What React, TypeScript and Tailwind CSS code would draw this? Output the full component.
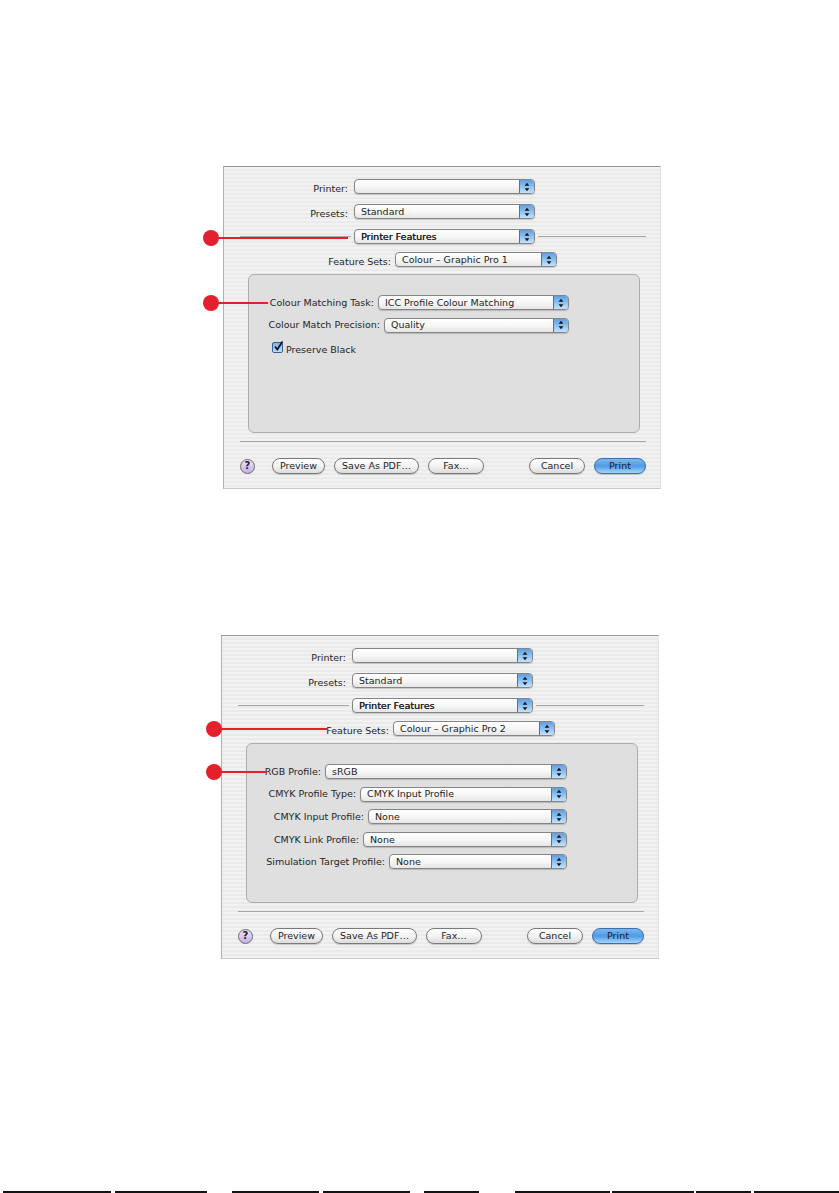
import type { ReactNode } from "react";

// Scanned page strip at the very bottom of the sheet
const SCAN_SEGMENTS = [
  "ml-[3px] w-[108px]",
  "ml-[4px] w-[92px]",
  "ml-[25px] w-[87px]",
  "ml-[4px] w-[87px]",
  "ml-[14px] w-[55px]",
  "ml-[36px] w-[95px]",
  "ml-[2px] w-[82px]",
  "ml-[2px] w-[55px]",
  "ml-[3px] w-[85px]",
];

function Arrows() {
  return (
    <svg width="6" height="10" viewBox="0 0 6 10" className="block">
      <path d="M3 0.8 L5.4 3.8 H0.6 Z M3 9.2 L5.4 6.2 H0.6 Z" fill="#151515" />
    </svg>
  );
}

function Popup({ value, className = "", strong = false }: { value: string; className?: string; strong?: boolean }) {
  return (
    <div
      className={`flex h-[15px] shrink-0 items-stretch overflow-hidden rounded-[4px] border border-[#858585] bg-linear-to-b from-white via-[#f7f7f7] to-[#e6e6e6] shadow-[0_1px_1px_rgba(0,0,0,0.18)] ${className}`}
    >
      <span
        className={`flex flex-1 items-center truncate pl-[6px] text-[9.5px] leading-none text-[#1c1c1c] ${
          strong ? "[text-shadow:0.25px_0_0_#1c1c1c]" : ""
        }`}
      >
        {value}
      </span>
      <span className="flex w-[15px] items-center justify-center border-l border-[#4a74b0] bg-linear-to-b from-[#5d9fe3] via-[#8cc0f0] to-[#c4e2fb]">
        <Arrows />
      </span>
    </div>
  );
}

function Pill({ label, className = "", primary = false }: { label: string; className?: string; primary?: boolean }) {
  return (
    <div
      className={`flex h-[16px] shrink-0 items-center justify-center rounded-full border text-[9.5px] leading-none text-[#1e1e1e] shadow-[0_1px_1px_rgba(0,0,0,0.18)] ${
        primary
          ? "border-[#3d6eae] bg-linear-to-b from-[#7ab8f0] via-[#4d9ae5] to-[#a6d4fa]"
          : "border-[#7a7a7a] bg-linear-to-b from-white via-[#f3f3f3] to-[#dcdcdc]"
      } ${className}`}
    >
      {label}
    </div>
  );
}

function Callout({ className, lineClass }: { className: string; lineClass: string }) {
  return (
    <div className={`absolute flex items-center ${className}`}>
      <div className="h-[16px] w-[16px] rounded-full bg-[#e3202b]" />
      <div className={`-ml-[2px] h-[2px] bg-[#e3202b] ${lineClass}`} />
    </div>
  );
}

function Label({ children }: { children: ReactNode }) {
  return <span className="whitespace-nowrap text-[9.5px] leading-none text-[#252525]">{children}</span>;
}

function InnerRow({ label, value, popupClass }: { label: string; value: string; popupClass: string }) {
  return (
    <div className="flex h-[15px] items-center justify-end pr-[70px]">
      <Label>{label}</Label>
      <Popup value={value} className={`ml-[4px] ${popupClass}`} />
    </div>
  );
}

function PrintDialog({
  featureSet,
  heightClass,
  boxClass,
  children,
  callouts,
}: {
  featureSet: string;
  heightClass: string;
  boxClass: string;
  children: ReactNode;
  callouts: ReactNode;
}) {
  return (
    <div
      className={`relative flex w-[438px] flex-col border-t border-l border-b border-r border-t-[#979797] border-l-[#b0b0b0] border-b-[#c9c9c9] border-r-[#e2e2e2] bg-[image:repeating-linear-gradient(to_bottom,#f2f2f2_0px,#f2f2f2_2px,#eaeaea_2px,#eaeaea_4px)] ${heightClass}`}
    >
      <div className="mt-[12px] flex h-[15px] items-center">
        <span className="w-[124px] text-right">
          <Label>Printer:</Label>
        </span>
        <Popup value="" className="ml-[6px] w-[181px]" />
      </div>

      <div className="mt-[10px] flex h-[15px] items-center">
        <span className="w-[124px] text-right">
          <Label>Presets:</Label>
        </span>
        <Popup value="Standard" className="ml-[6px] w-[181px]" />
      </div>

      <div className="mt-[10px] flex h-[15px] items-center">
        <div className="ml-[16px] h-px w-[111px] bg-[#a6a6a6]" />
        <Popup value="Printer Features" strong className="ml-[3px] w-[181px]" />
        <div className="mr-[14px] ml-[3px] h-px flex-1 bg-[#a6a6a6]" />
      </div>

      <div className="mt-[8px] flex h-[15px] items-center">
        <span className="w-[167px] text-right">
          <Label>Feature Sets:</Label>
        </span>
        <Popup value={featureSet} className="ml-[4px] w-[162px]" />
      </div>

      <div
        className={`mt-[7px] ml-[24px] flex w-[392px] flex-col gap-[7.6px] rounded-[6px] border border-[#adadad] bg-[#dfdfdf] pt-[20px] ${boxClass}`}
      >
        {children}
      </div>

      <div className="mt-[8px] mr-[14px] ml-[16px] h-px bg-[#a6a6a6]" />

      <div className="mt-[16px] flex h-[16px] items-center pr-[14px] pl-[16px]">
        <div className="flex h-[15px] w-[15px] items-center justify-center rounded-full border border-[#6c6c6c] bg-linear-to-b from-[#eee3fa] to-[#c6aee6] text-[10px] font-bold leading-none text-[#222]">
          ?
        </div>
        <Pill label="Preview" className="ml-[17px] w-[53px]" />
        <Pill label="Save As PDF…" className="ml-[9px] w-[85px]" />
        <Pill label="Fax…" className="ml-[9px] w-[56px]" />
        <div className="flex-1" />
        <Pill label="Cancel" className="w-[56px]" />
        <Pill label="Print" primary className="ml-[9px] w-[52px]" />
      </div>

      {callouts}
    </div>
  );
}

export default function App() {
  return (
    <div className="flex min-h-[1193px] w-[839px] flex-col bg-white font-['DejaVu_Sans',Verdana,sans-serif]">
      <div className="mt-[166px] ml-[223px]">
        <PrintDialog
          featureSet="Colour – Graphic Pro 1"
          heightClass="h-[323px]"
          boxClass="h-[159px]"
          callouts={
            <>
              <Callout className="top-[63px] left-[-21px]" lineClass="w-[131px]" />
              <Callout className="top-[128px] left-[-21px]" lineClass="w-[51px]" />
            </>
          }
        >
          <InnerRow label="Colour Matching Task:" value="ICC Profile Colour Matching" popupClass="w-[191px]" />
          <InnerRow label="Colour Match Precision:" value="Quality" popupClass="w-[185px]" />
          <div className="flex h-[15px] items-center pl-[23px]">
            <span className="flex h-[11px] w-[11px] items-center justify-center rounded-[2px] border border-[#3b5e96] bg-linear-to-b from-[#76b1ee] to-[#c0e0fb]">
              <svg width="11" height="11" viewBox="0 0 11 11" className="-mt-[2px] ml-[1px] overflow-visible">
                <path d="M2 5.5 L4.3 8.5 L9.5 0.5" fill="none" stroke="#111" strokeWidth="1.7" />
              </svg>
            </span>
            <span className="ml-[3px]">
              <Label>Preserve Black</Label>
            </span>
          </div>
        </PrintDialog>
      </div>

      <div className="mt-[146px] ml-[221px]">
        <PrintDialog
          featureSet="Colour – Graphic Pro 2"
          heightClass="h-[324px]"
          boxClass="h-[160px]"
          callouts={
            <>
              <Callout className="top-[85px] left-[-16px]" lineClass="w-[107px]" />
              <Callout className="top-[128px] left-[-16px]" lineClass="w-[47px]" />
            </>
          }
        >
          <InnerRow label="RGB Profile:" value="sRGB" popupClass="w-[242px]" />
          <InnerRow label="CMYK Profile Type:" value="CMYK Input Profile" popupClass="w-[207px]" />
          <InnerRow label="CMYK Input Profile:" value="None" popupClass="w-[199px]" />
          <InnerRow label="CMYK Link Profile:" value="None" popupClass="w-[204px]" />
          <InnerRow label="Simulation Target Profile:" value="None" popupClass="w-[178px]" />
        </PrintDialog>
      </div>

      <div className="mt-auto flex h-[2px]">
        {SCAN_SEGMENTS.map((seg, i) => (
          <div key={i} className={`h-full bg-[#141414] ${seg}`} />
        ))}
      </div>
    </div>
  );
}
